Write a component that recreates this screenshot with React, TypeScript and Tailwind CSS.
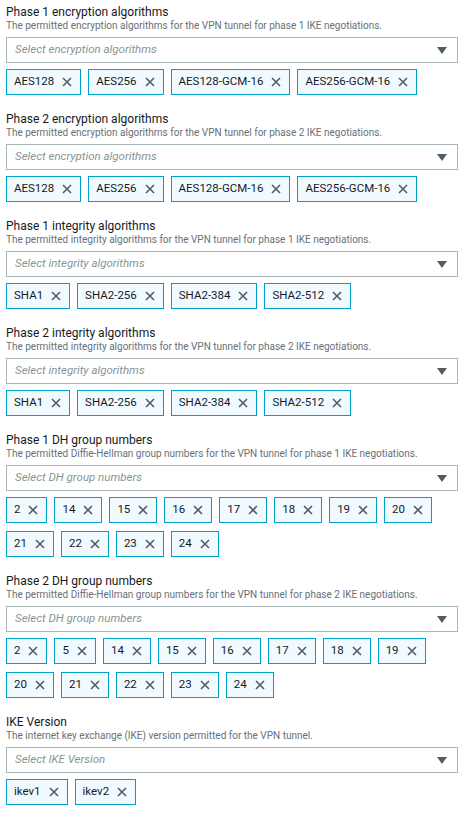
import React from 'react';

type Field = {
  label: string;
  hint: string;
  placeholder: string;
  values: string[];
};

const fields: Field[] = [
  {
    label: 'Phase 1 encryption algorithms',
    hint: 'The permitted encryption algorithms for the VPN tunnel for phase 1 IKE negotiations.',
    placeholder: 'Select encryption algorithms',
    values: ['AES128', 'AES256', 'AES128-GCM-16', 'AES256-GCM-16'],
  },
  {
    label: 'Phase 2 encryption algorithms',
    hint: 'The permitted encryption algorithms for the VPN tunnel for phase 2 IKE negotiations.',
    placeholder: 'Select encryption algorithms',
    values: ['AES128', 'AES256', 'AES128-GCM-16', 'AES256-GCM-16'],
  },
  {
    label: 'Phase 1 integrity algorithms',
    hint: 'The permitted integrity algorithms for the VPN tunnel for phase 1 IKE negotiations.',
    placeholder: 'Select integrity algorithms',
    values: ['SHA1', 'SHA2-256', 'SHA2-384', 'SHA2-512'],
  },
  {
    label: 'Phase 2 integrity algorithms',
    hint: 'The permitted integrity algorithms for the VPN tunnel for phase 2 IKE negotiations.',
    placeholder: 'Select integrity algorithms',
    values: ['SHA1', 'SHA2-256', 'SHA2-384', 'SHA2-512'],
  },
  {
    label: 'Phase 1 DH group numbers',
    hint: 'The permitted Diffie-Hellman group numbers for the VPN tunnel for phase 1 IKE negotiations.',
    placeholder: 'Select DH group numbers',
    values: ['2', '14', '15', '16', '17', '18', '19', '20', '21', '22', '23', '24'],
  },
  {
    label: 'Phase 2 DH group numbers',
    hint: 'The permitted Diffie-Hellman group numbers for the VPN tunnel for phase 2 IKE negotiations.',
    placeholder: 'Select DH group numbers',
    values: ['2', '5', '14', '15', '16', '17', '18', '19', '20', '21', '22', '23', '24'],
  },
  {
    label: 'IKE Version',
    hint: 'The internet key exchange (IKE) version permitted for the VPN tunnel.',
    placeholder: 'Select IKE Version',
    values: ['ikev1', 'ikev2'],
  },
];

function CloseIcon() {
  return (
    <svg width="10" height="10" viewBox="0 0 10 10" className="shrink-0">
      <path d="M1 1L9 9M9 1L1 9" stroke="#545b64" strokeWidth="1.6" fill="none" />
    </svg>
  );
}

function Token({ value }: { value: string }) {
  return (
    <div className="flex h-[26px] items-center gap-[8px] border border-[#00a1c9] bg-[#f1faff] pl-[7px] pr-[8px] text-[11.5px] text-[#16191f]">
      <span>{value}</span>
      <CloseIcon />
    </div>
  );
}

function MultiSelect({ field }: { field: Field }) {
  return (
    <div className="flex flex-col">
      <div className="text-[12px] leading-[14px] text-[#16191f]">{field.label}</div>
      <div className="text-[10px] leading-[14px] text-[#687078]">{field.hint}</div>
      <div className="mt-[4px] flex h-[26px] w-[452px] items-center justify-between border border-[#aab7b8] bg-white pl-[8px] pr-[10px]">
        <span className="text-[11.5px] italic text-[#879596]">{field.placeholder}</span>
        <svg width="10" height="7" viewBox="0 0 10 7">
          <path d="M0 0H10L5 7Z" fill="#545b64" />
        </svg>
      </div>
      <div className="mt-[6px] flex w-[452px] flex-wrap gap-x-[7px] gap-y-[8px]">
        {field.values.map((v) => (
          <Token key={v} value={v} />
        ))}
      </div>
    </div>
  );
}

export default function App() {
  return (
    <div className="min-h-screen bg-white px-[6px] pt-[5px] font-['Roboto',sans-serif]">
      <div className="flex flex-col gap-[17px]">
        {fields.map((f) => (
          <MultiSelect key={f.label} field={f} />
        ))}
      </div>
    </div>
  );
}
